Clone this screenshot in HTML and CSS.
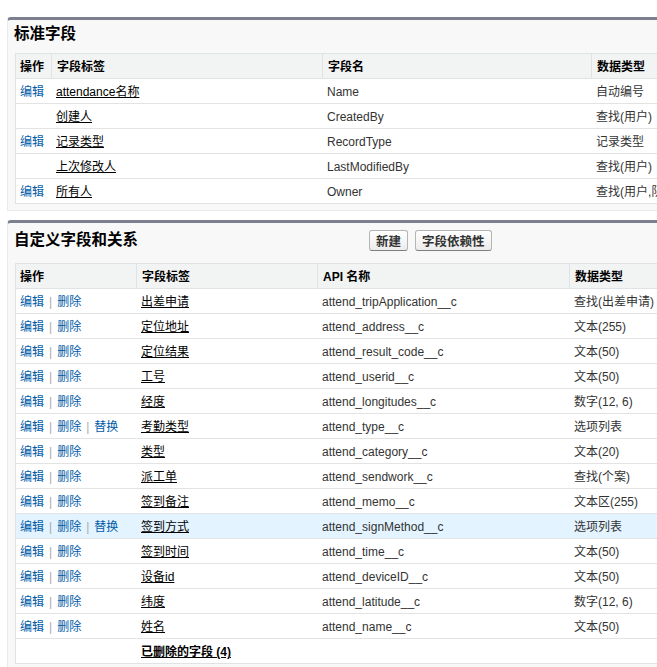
FILE: index.html
```html
<!DOCTYPE html>
<html lang="zh-CN">
<head>
<meta charset="utf-8">
<title>字段</title>
<link rel="stylesheet" href="styles.css">
</head>
<body>
<div class="page">
  <section class="block">
    <div class="block-head std-head"><h2 class="title">标准字段</h2></div>
    <table class="list">
      <colgroup><col class="s1"><col class="s2"><col class="s3"><col></colgroup>
      <thead>
        <tr><th>操作</th><th>字段标签</th><th>字段名</th><th>数据类型</th></tr>
      </thead>
      <tbody>
        <tr><td><a class="act">编辑</a></td><td><a class="lbl">attendance名称</a></td><td>Name</td><td>自动编号</td></tr>
        <tr><td></td><td><a class="lbl">创建人</a></td><td>CreatedBy</td><td>查找(用户)</td></tr>
        <tr><td><a class="act">编辑</a></td><td><a class="lbl">记录类型</a></td><td>RecordType</td><td>记录类型</td></tr>
        <tr><td></td><td><a class="lbl">上次修改人</a></td><td>LastModifiedBy</td><td>查找(用户)</td></tr>
        <tr><td><a class="act">编辑</a></td><td><a class="lbl">所有人</a></td><td>Owner</td><td>查找(用户,队列)</td></tr>
      </tbody>
    </table>
  </section>

  <section class="block custom">
    <div class="block-head custom-head">
      <h2 class="title custom-title">自定义字段和关系</h2>
      <div class="buttons">
        <button class="btn" type="button">新建</button>
        <button class="btn" type="button">字段依赖性</button>
      </div>
    </div>
    <table class="list">
      <colgroup><col class="c1"><col class="c2"><col class="c3"><col></colgroup>
      <thead>
        <tr><th>操作</th><th>字段标签</th><th>API 名称</th><th>数据类型</th></tr>
      </thead>
      <tbody>
        <tr><td><a class="act">编辑</a><span class="sep">|</span><a class="act">删除</a></td><td><a class="lbl">出差申请</a></td><td>attend_tripApplication__c</td><td>查找(出差申请)</td></tr>
        <tr><td><a class="act">编辑</a><span class="sep">|</span><a class="act">删除</a></td><td><a class="lbl">定位地址</a></td><td>attend_address__c</td><td>文本(255)</td></tr>
        <tr><td><a class="act">编辑</a><span class="sep">|</span><a class="act">删除</a></td><td><a class="lbl">定位结果</a></td><td>attend_result_code__c</td><td>文本(50)</td></tr>
        <tr><td><a class="act">编辑</a><span class="sep">|</span><a class="act">删除</a></td><td><a class="lbl">工号</a></td><td>attend_userid__c</td><td>文本(50)</td></tr>
        <tr><td><a class="act">编辑</a><span class="sep">|</span><a class="act">删除</a></td><td><a class="lbl">经度</a></td><td>attend_longitudes__c</td><td>数字(12, 6)</td></tr>
        <tr><td><a class="act">编辑</a><span class="sep">|</span><a class="act">删除</a><span class="sep">|</span><a class="act">替换</a></td><td><a class="lbl">考勤类型</a></td><td>attend_type__c</td><td>选项列表</td></tr>
        <tr><td><a class="act">编辑</a><span class="sep">|</span><a class="act">删除</a></td><td><a class="lbl">类型</a></td><td>attend_category__c</td><td>文本(20)</td></tr>
        <tr><td><a class="act">编辑</a><span class="sep">|</span><a class="act">删除</a></td><td><a class="lbl">派工单</a></td><td>attend_sendwork__c</td><td>查找(个案)</td></tr>
        <tr><td><a class="act">编辑</a><span class="sep">|</span><a class="act">删除</a></td><td><a class="lbl">签到备注</a></td><td>attend_memo__c</td><td>文本区(255)</td></tr>
        <tr class="hl"><td><a class="act">编辑</a><span class="sep">|</span><a class="act">删除</a><span class="sep">|</span><a class="act">替换</a></td><td><a class="lbl">签到方式</a></td><td>attend_signMethod__c</td><td>选项列表</td></tr>
        <tr><td><a class="act">编辑</a><span class="sep">|</span><a class="act">删除</a></td><td><a class="lbl">签到时间</a></td><td>attend_time__c</td><td>文本(50)</td></tr>
        <tr><td><a class="act">编辑</a><span class="sep">|</span><a class="act">删除</a></td><td><a class="lbl">设备id</a></td><td>attend_deviceID__c</td><td>文本(50)</td></tr>
        <tr><td><a class="act">编辑</a><span class="sep">|</span><a class="act">删除</a></td><td><a class="lbl">纬度</a></td><td>attend_latitude__c</td><td>数字(12, 6)</td></tr>
        <tr><td><a class="act">编辑</a><span class="sep">|</span><a class="act">删除</a></td><td><a class="lbl">姓名</a></td><td>attend_name__c</td><td>文本(50)</td></tr>
        <tr class="deleted"><td></td><td><a class="lbl strong">已删除的字段 (4)</a></td><td></td><td></td></tr>
      </tbody>
    </table>
  </section>
</div>
</body>
</html>
```

FILE: styles.css
```css
html, body {
  margin: 0;
  padding: 0;
  overflow: hidden;
  background: #ffffff;
}

body {
  font-family: "Liberation Sans", Arial, "Noto Sans CJK SC", sans-serif;
  font-size: 12px;
  color: #222222;
}

.page {
  width: 800px;
  padding: 17px 0 0 7px;
}

.block {
  background: #f8f8f8;
  border: 1px solid #eaeaea;
  border-top: 3px solid #7b7f8e;
  border-radius: 4px 0 0 0;
  padding: 0 0 6px 7px;
  margin-bottom: 9px;
}

.block.custom {
  padding-bottom: 4px;
}

.block-head {
  display: flex;
  align-items: flex-start;
}

.std-head {
  height: 33px;
}

.custom-head {
  height: 40px;
}

.title {
  margin: 0 0 0 -1px;
  font-size: 15.5px;
  font-weight: bold;
  color: #000000;
  font-family: "Noto Sans CJK SC", "Liberation Sans", sans-serif;
  line-height: 20px;
  padding-top: 2px;
}

.custom-title {
  padding-top: 5px;
  width: 355px;
  flex: none;
}

.buttons {
  display: flex;
  gap: 7px;
  padding-top: 7px;
}

.btn {
  height: 21px;
  padding: 0 6px;
  border: 1px solid #b5b5b5;
  border-bottom-color: #7f7f7f;
  border-radius: 3px;
  background: linear-gradient(#ffffff, #ececec);
  color: #333333;
  font-family: "Noto Sans CJK SC", "Liberation Sans", sans-serif;
  font-size: 12.5px;
  font-weight: bold;
  line-height: 19px;
}

.list {
  width: 100%;
  table-layout: fixed;
  border-collapse: separate;
  border-spacing: 0;
  background: #ffffff;
  border: 1px solid #e0e3e5;
}

.s1 { width: 35px; }
.s2 { width: 271px; }
.s3 { width: 269px; }

.c1 { width: 120px; }
.c2 { width: 181px; }
.c3 { width: 252px; }

.list th {
  background: #f2f3f3;
  border-bottom: 1px solid #e0e3e5;
  text-align: left;
  font-weight: bold;
  color: #000000;
  line-height: 22px;
  padding: 2px 5px 0 5px;
  white-space: nowrap;
}

.list th + th {
  border-left: 1px solid #e0e3e5;
}

.list td {
  line-height: 22px;
  padding: 2px 5px 0 5px;
  border-bottom: 1px solid #e3e3e3;
  white-space: nowrap;
  overflow: hidden;
  color: #333333;
}

.list th:first-child,
.list td:first-child {
  padding-left: 4px;
}

.list tr:last-child td {
  border-bottom: none;
}

.list tr.hl td {
  background: #e3f3ff;
}

.act {
  color: #015ba7;
  text-decoration: none;
}

.sep {
  color: #aaaaaa;
  margin: 0 5px;
}

.lbl {
  color: #000000;
  text-decoration: underline;
}

.lbl.strong {
  font-weight: bold;
}
```
